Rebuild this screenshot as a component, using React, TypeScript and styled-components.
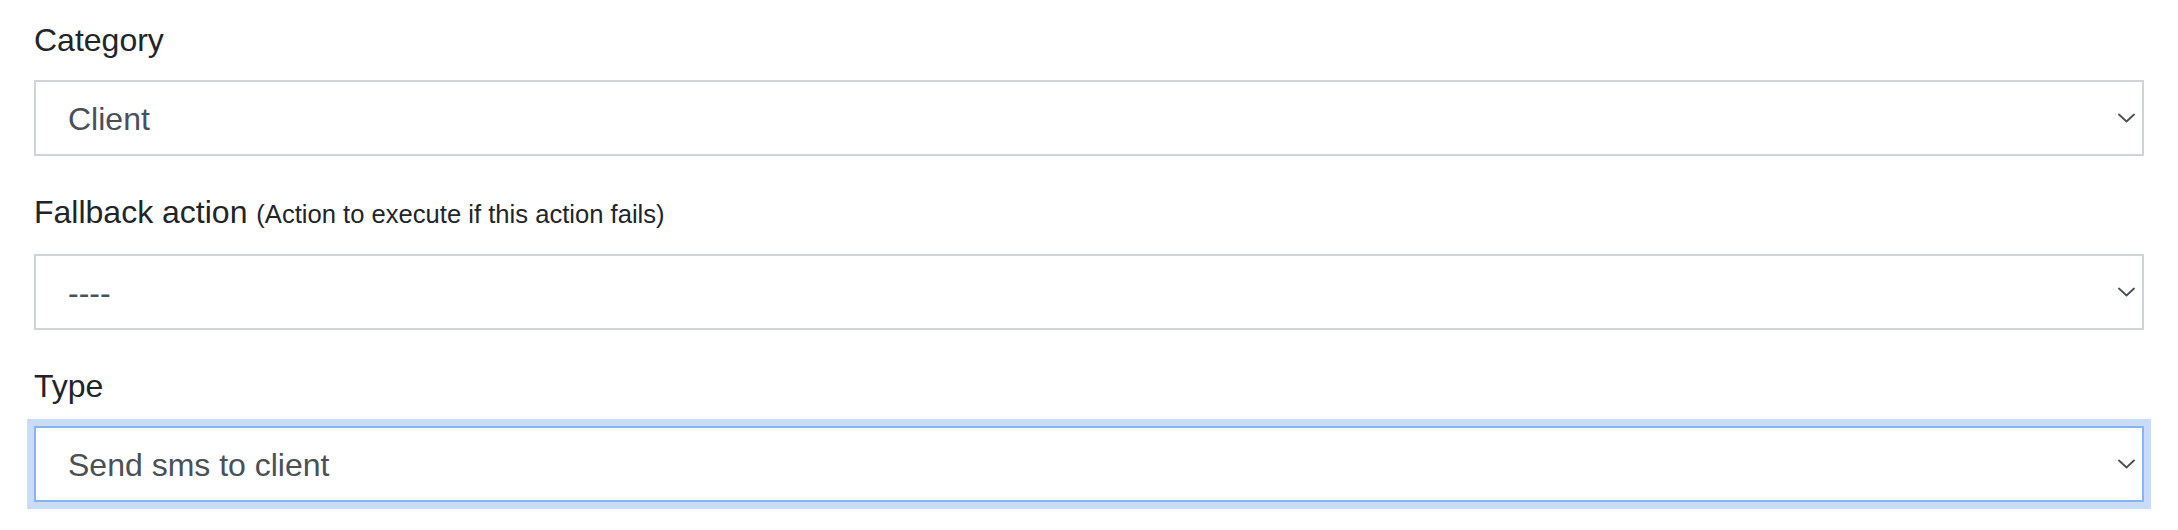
import React from "react";
import styled, { createGlobalStyle } from "styled-components";

const Global = createGlobalStyle`
  html, body { margin: 0; padding: 0; background: #fff; }
  body { font-family: "Liberation Sans", Arial, sans-serif; }
  * { box-sizing: border-box; }
`;

const Form = styled.form`
  padding: 16px 34px 0 34px;
  font-family: "Liberation Sans", Arial, sans-serif;
  font-size: 32px;
  line-height: 1.5;
  color: #212529;
`;

const Group = styled.div`
  margin-bottom: 32px;
`;

const Label = styled.label`
  display: block;
  margin-bottom: 16px;
  font-size: 32px;
  line-height: 48px;
  color: #212529;
`;

const Hint = styled.small`
  font-size: 25.6px;
  font-weight: 400;
`;

const SelectWrap = styled.div`
  position: relative;
  width: 100%;
`;

const Select = styled.select<{ $focused?: boolean }>`
  display: block;
  width: 100%;
  height: 76px;
  margin: 0;
  padding: 2px 60px 0 32px;
  font-family: "Liberation Sans", Arial, sans-serif;
  font-size: 32px;
  line-height: 48px;
  color: #495057;
  background: #fff;
  border: 2px solid ${(p) => (p.$focused ? "#86b5f5" : "#ced4da")};
  border-radius: 0;
  appearance: none;
  -webkit-appearance: none;
  outline: none;
  box-shadow: ${(p) => (p.$focused ? "0 0 0 7px #cadcfc" : "none")};
`;

const Chevron = styled.svg`
  position: absolute;
  right: 9px;
  top: 50%;
  width: 17px;
  height: 10px;
  margin-top: -5px;
  pointer-events: none;
`;

function Field({
  label,
  hint,
  value,
  options,
  focused,
}: {
  label: string;
  hint?: string;
  value: string;
  options: string[];
  focused?: boolean;
}) {
  return (
    <Group>
      <Label>
        {label}
        {hint ? <> <Hint>{hint}</Hint></> : null}
      </Label>
      <SelectWrap>
        <Select $focused={focused} defaultValue={value}>
          {options.map((o) => (
            <option key={o} value={o}>
              {o}
            </option>
          ))}
        </Select>
        <Chevron viewBox="0 0 17 10" fill="none">
          <path d="M1 1.5 L8.5 8.5 L16 1.5" stroke="#4a4f55" strokeWidth="1.8" strokeLinecap="round" strokeLinejoin="round" />
        </Chevron>
      </SelectWrap>
    </Group>
  );
}

export default function App() {
  return (
    <>
      <Global />
      <Form onSubmit={(e) => e.preventDefault()}>
        <Field label="Category" value="Client" options={["Client", "Staff", "Admin"]} />
        <Field
          label="Fallback action"
          hint="(Action to execute if this action fails)"
          value="----"
          options={["----"]}
        />
        <Field
          label="Type"
          value="Send sms to client"
          options={["Send sms to client", "Send email to client"]}
          focused
        />
      </Form>
    </>
  );
}
